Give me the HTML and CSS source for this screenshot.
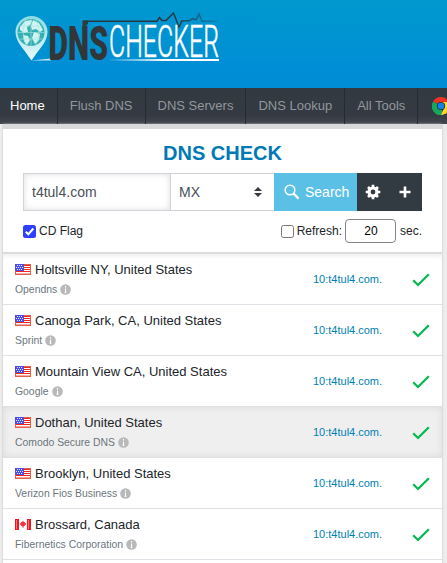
FILE: index.html
```html
<!DOCTYPE html>
<html lang="en">
<head>
<meta charset="utf-8">
<title>DNS Checker</title>
<link rel="stylesheet" href="styles.css">
</head>
<body>
<svg class="defs" aria-hidden="true">
  <symbol id="us" viewBox="0 0 16 11">
    <rect width="16" height="11" fill="#fff"/>
    <path d="M0 1.500H16M0 3.500H16M0 5.500H16M0 7.500H16" stroke="#f5271b"/>
    <path d="M0 .5H16M0 10.500H16M15.500 0V11M.5 7V11" stroke="#e0604c"/>
    <path d="M1 9.500H15" stroke="#f8a8a0"/>
    <rect width="9" height="7" fill="#4c4ee6"/>
    <path d="M2 1.500H8M1 3.500H8M2 5.500H8" stroke="#e4e4ff" stroke-dasharray="1 1"/>
  </symbol>
  <symbol id="ca" viewBox="0 0 16 11">
    <rect width="16" height="11" fill="#fff"/>
    <path d="M0 0H4V11H0ZM12 0H16V11H12Z" fill="#ed1822"/>
    <path d="M1.500 1V10M13.500 1V10" stroke="#ff7878"/>
    <path d="M8 1.500L9 3.200 10 3V4.200L11.200 4 10.700 5.800 9 7.200H8.500V8.800H7.500V7.200H7L5.300 5.800 4.800 4 6 4.200V3L7 3.200Z" fill="#f5303a"/>
  </symbol>
  <symbol id="info" viewBox="0 0 11 11">
    <circle cx="5.500" cy="5.500" r="5.300" fill="#b9b9b9"/>
    <path d="M5.500 2V3.400M5.500 4.500V8.700M4.700 8.400H6.300" stroke="#fff" stroke-width="1.100"/>
  </symbol>
  <symbol id="tick" viewBox="0 0 18 14">
    <path d="M1.200 7.300L6 12L16.800 1.200" fill="none" stroke="#08b854" stroke-width="2.300"/>
  </symbol>
</svg>

<header class="header">
  <svg class="logo" width="208" height="54" viewBox="14 10 208 54">
    <defs>
      <linearGradient id="pin" x2="0" y2="1"><stop offset="0" stop-color="#8adbe3"/><stop offset="1" stop-color="#e9faff"/></linearGradient>
      <linearGradient id="fade" gradientUnits="userSpaceOnUse" x1="107" x2="165" y1="0" y2="0"><stop offset="0" stop-color="#fff" stop-opacity="0"/><stop offset="1" stop-color="#fff"/></linearGradient>
      <linearGradient id="pulse" gradientUnits="userSpaceOnUse" x1="175" x2="218" y1="0" y2="0"><stop offset="0" stop-color="#263942"/><stop offset="1" stop-color="#263942" stop-opacity=".15"/></linearGradient>
    </defs>
    <path d="M15.500 32A16 16 0 0 1 47.500 32C47.500 42 39 49 31.500 60.500C24 49 15.500 42 15.500 32Z" fill="url(#pin)"/>
    <circle cx="31" cy="32.500" r="13.500" fill="#35afb2"/>
    <path d="M20 27l5-6 7-1-1 4-4 3 1 5-4 1-4-3ZM33 20l6 3 4 7-3 2-4-3-4 1-1-4ZM23 35l5 1 2 4-3 5-3-4ZM34 32l6 2-1 6-4 4-3-6Z" fill="#cff4f2"/>
    <path d="M18 32.500H44M20 26H42M20 39H42M31 19V46M26 20Q20 32 26 45M36 20Q42 32 36 45" fill="none" stroke="#a5e4e3" stroke-width=".6"/>
    <path d="M31 60.500h20v-2Z" fill="#bfe8f8"/>
    <text class="logo-bold" x="48.500" y="60.300" textLength="59.500" lengthAdjust="spacingAndGlyphs">DNS</text>
    <path d="M84.500 30V22.500H88" fill="none" stroke="#333a3d" stroke-width="4"/>
    <path d="M83 21.200H157L159.500 17.500 162 20.500H166L173.500 13 179 27 182 20.800H189L193 18.500 196 20 199 14 202 21.200H217" fill="none" stroke="url(#pulse)" stroke-width="1.500"/>
    <text class="logo-thin" x="109" y="57.300" textLength="110" lengthAdjust="spacingAndGlyphs">CHECKER</text>
    <rect x="107" y="59" width="112" height="2" fill="url(#fade)"/>
  </svg>
</header>

<nav class="nav">
  <a class="active">Home</a><a>Flush DNS</a><a>DNS Servers</a><a>DNS Lookup</a><a>All Tools</a>
  <svg class="chrome" width="18" height="18" viewBox="0 0 18 18">
    <path d="M9 9L1.200 4.500A9 9 0 0 1 16.800 4.500Z" fill="#ea3323"/>
    <path d="M9 9L11 18A9 9 0 0 1 1.200 4.500Z" fill="#17a65a"/>
    <path d="M9 5H17A9 9 0 0 1 9 18L12 11Z" fill="#ffd52e"/>
    <circle cx="9" cy="9" r="4.100" fill="#153449"/><circle cx="9" cy="9" r="3.300" fill="#167fe8"/>
  </svg>
</nav>

<main class="card">
  <section class="form">
    <h1>DNS CHECK</h1>
    <div class="controls">
      <div class="domain">t4tul4.com</div>
      <div class="type">MX
        <svg width="8" height="10" viewBox="0 0 8 10"><path d="M0 4L4 0L8 4ZM0 6H8L4 10Z" fill="#343a40"/></svg>
      </div>
      <div class="search">
        <svg width="16" height="16" viewBox="0 0 16 16" fill="none" stroke="#fff"><circle cx="6" cy="6" r="4.800" stroke-width="1.500"/><path d="M9.600 9.600L14.600 14.600" stroke-width="2.200"/></svg>Search
      </div>
      <div class="tools">
        <svg width="16" height="16" viewBox="-8 -8 16 16"><circle r="4" fill="none" stroke="#fff" stroke-width="3.200"/><path d="M0-7.300V-4M0 7.300V4M-7.300 0H-4M7.300 0H4M-5-5L-3-3M5 5L3 3M-5 5L-3 3M5-5L3-3" stroke="#fff" stroke-width="2.700"/></svg>
        <svg width="12" height="12" viewBox="0 0 12 12"><path d="M6 .5V11.500M.5 6H11.500" stroke="#fff" stroke-width="2.600"/></svg>
      </div>
    </div>
    <div class="options">
      <span class="box checked"><svg width="13" height="13" viewBox="0 0 13 13"><path d="M2.800 6.800L5.300 9.300L10.300 3.500" fill="none" stroke="#fff" stroke-width="2"/></svg></span>
      <span>CD Flag</span>
      <span class="box refresh"></span>
      <span>Refresh:</span>
      <span class="seconds">20</span>
      <span>sec.</span>
    </div>
  </section>

  <section class="results">
    <div class="row"><div class="place"><div class="city"><svg class="flag"><use href="#us"/></svg>Holtsville NY, United States</div><div class="isp">Opendns<svg class="info"><use href="#info"/></svg></div></div><span class="answer">10:t4tul4.com.</span><svg class="tick"><use href="#tick"/></svg></div>
    <div class="row"><div class="place"><div class="city"><svg class="flag"><use href="#us"/></svg>Canoga Park, CA, United States</div><div class="isp">Sprint<svg class="info"><use href="#info"/></svg></div></div><span class="answer">10:t4tul4.com.</span><svg class="tick"><use href="#tick"/></svg></div>
    <div class="row"><div class="place"><div class="city"><svg class="flag"><use href="#us"/></svg>Mountain View CA, United States</div><div class="isp">Google<svg class="info"><use href="#info"/></svg></div></div><span class="answer">10:t4tul4.com.</span><svg class="tick"><use href="#tick"/></svg></div>
    <div class="row hover"><div class="place"><div class="city"><svg class="flag"><use href="#us"/></svg>Dothan, United States</div><div class="isp">Comodo Secure DNS<svg class="info"><use href="#info"/></svg></div></div><span class="answer">10:t4tul4.com.</span><svg class="tick"><use href="#tick"/></svg></div>
    <div class="row"><div class="place"><div class="city"><svg class="flag"><use href="#us"/></svg>Brooklyn, United States</div><div class="isp">Verizon Fios Business<svg class="info"><use href="#info"/></svg></div></div><span class="answer">10:t4tul4.com.</span><svg class="tick"><use href="#tick"/></svg></div>
    <div class="row"><div class="place"><div class="city"><svg class="flag"><use href="#ca"/></svg>Brossard, Canada</div><div class="isp">Fibernetics Corporation<svg class="info"><use href="#info"/></svg></div></div><span class="answer">10:t4tul4.com.</span><svg class="tick"><use href="#tick"/></svg></div>
  </section>
</main>
</body>
</html>
```
FILE: styles.css
```css
* { box-sizing: border-box; }
html { height: 563px; overflow: hidden; }
body {
  margin: 0;
  height: 563px;
  overflow: hidden;
  background: #ededee;
  color: #212529;
  font-family: "Liberation Sans", Arial, sans-serif;
}
svg { display: block; flex: none; }
.defs { position: absolute; width: 0; height: 0; }

.header {
  height: 88px;
  padding: 10px 14px;
  background: linear-gradient(#0099cf, #008dd5 85%);
}
.logo { overflow: visible; }
.logo-bold { font: 900 48.5px Roboto, sans-serif; fill: #333638; }
.logo-thin { font: 300 45px Roboto, sans-serif; fill: #fff; stroke: #fff; stroke-width: .6px; }

.nav {
  display: flex;
  height: 36px;
  overflow: hidden;
  background: linear-gradient(#323a41, #343a43 75%, #42464f);
  font-size: 13px;
  line-height: 35px;
}
.nav a {
  padding: 0 12px;
  border-right: 1px solid #262b30;
  color: #92979b;
  white-space: nowrap;
}
.nav a:first-child { padding-left: 10px; }
.nav .active { color: #fff; }
.chrome { margin: 9px 0 0 14px; }

.card {
  width: 439px;
  height: 445px;
  margin-left: 3px;
  border-top: 5px solid #d9d9d9;
  background: #fff;
  box-shadow: 0 0 2px #bbb;
}
.form {
  height: 125px;
  padding: 13px 20px 0;
  border-bottom: 2px solid #dcdcdc;
}
h1 {
  margin: 0 0 8px;
  color: #007ab5;
  font-size: 20px;
  line-height: 23px;
  text-align: center;
}
.controls {
  display: flex;
  height: 38px;
  color: #495057;
  font-size: 14px;
  line-height: 36px;
}
.domain {
  width: 148px;
  padding-left: 8px;
  border: 1px solid #ced4da;
  box-shadow: inset 0 0 6px #ddd;
}
.type {
  display: flex;
  align-items: center;
  justify-content: space-between;
  width: 103px;
  padding: 0 12px 0 8px;
  border: solid #ced4da;
  border-width: 1px 0;
}
.search {
  display: flex;
  align-items: center;
  gap: 5px;
  width: 83px;
  padding-left: 10px;
  background: #5bc0e5;
  color: #fff;
}
.tools {
  display: flex;
  align-items: center;
  gap: 18px;
  width: 65px;
  padding-left: 8px;
  background: #323a42;
}
.options {
  display: flex;
  align-items: center;
  height: 24px;
  margin-top: 8px;
  font-size: 12px;
}
.box {
  width: 13px;
  height: 13px;
  margin-right: 3px;
  border: 1px solid #767676;
  border-radius: 2.5px;
}
.checked { border: 0; background: #2f3fff; }
.refresh { margin-left: auto; }
.seconds {
  width: 51px;
  height: 24px;
  margin: 0 3.5px;
  border: 1px solid #858585;
  border-radius: 4px;
  color: #000;
  line-height: 22px;
  text-align: center;
}

.results { box-shadow: inset 0 5px 5px -3px #eee; }
.row {
  display: flex;
  height: 51px;
  padding: 0 12px;
  border-bottom: 1px solid #dee2e6;
}
.place { width: 298px; padding-top: 6px; }
.city {
  display: flex;
  align-items: center;
  gap: 4px;
  height: 18px;
  font-size: 13px;
}
.flag { width: 16px; height: 11px; }
.isp {
  display: flex;
  align-items: center;
  gap: 3px;
  height: 22px;
  color: #6c757d;
  font-size: 10.4px;
}
.info { width: 11px; height: 11px; }
.answer { width: 99px; color: #007fb2; font-size: 11px; line-height: 51px; }
.tick { width: 18px; height: 14px; margin-top: 19px; }
.hover { background: #efefef; box-shadow: inset 0 0 6px #d8d8d8; }
```
